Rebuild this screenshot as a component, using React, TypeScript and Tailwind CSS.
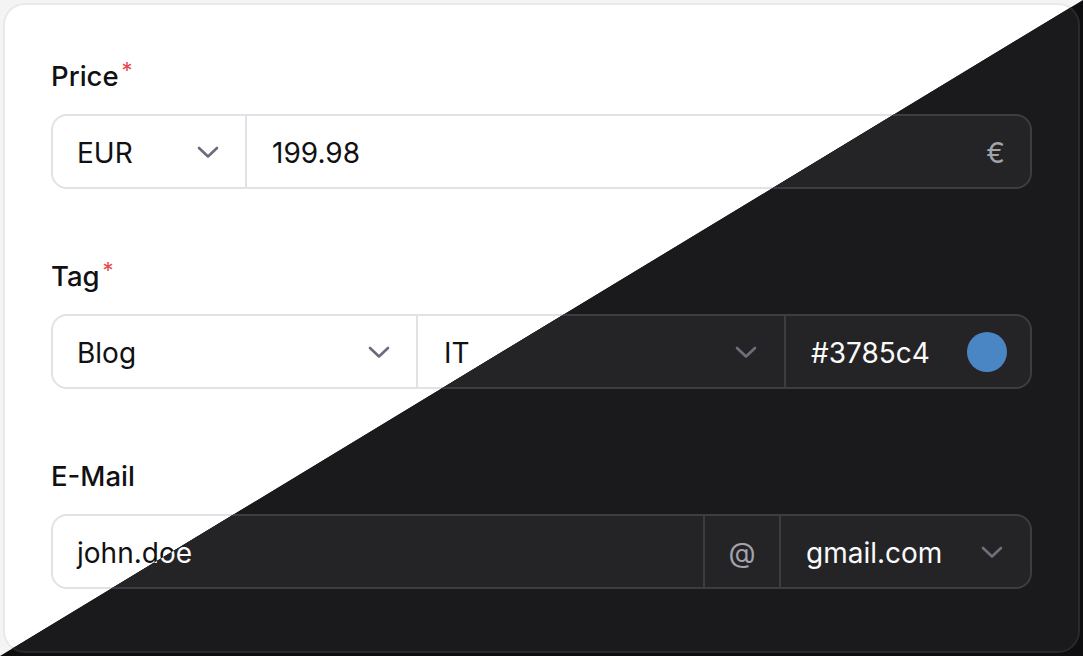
import React from "react";

type Theme = {
  page: string;
  card: string;
  label: string;
  group: string;
  divider: string;
  text: string;
  muted: string;
  chevron: string;
};

const light: Theme = {
  page: "bg-[#f4f4f5]",
  card: "bg-white border-[#e9e9ec]",
  label: "text-[#111113]",
  group: "bg-white border-[#e2e2e6]",
  divider: "border-[#e2e2e6]",
  text: "text-[#111113]",
  muted: "text-[#8b8b95]",
  chevron: "text-[#6b6b7b]",
};

const dark: Theme = {
  page: "bg-[#0e0e10]",
  card: "bg-[#1a1a1c] border-[#29292c]",
  label: "text-[#fafafa]",
  group: "bg-[#242427] border-[#3d3d41]",
  divider: "border-[#3d3d41]",
  text: "text-[#fafafa]",
  muted: "text-[#a3a3ab]",
  chevron: "text-[#6e6f7e]",
};

function Chevron({ className }: { className: string }) {
  return (
    <svg width="22" height="13" viewBox="0 0 22 13" className={className} fill="none">
      <path d="M2 2 L11 10.5 L20 2" stroke="currentColor" strokeWidth="2.6" strokeLinecap="round" strokeLinejoin="round" />
    </svg>
  );
}

function Label({ t, text, required }: { t: Theme; text: string; required?: boolean }) {
  return (
    <div className={`h-[36px] leading-[36px] text-[27.5px] font-medium ${t.label}`}>
      {text}
      {required && <span className="text-[#e5484d] text-[22px] font-normal align-top relative -top-[6px] ml-[3px]">*</span>}
    </div>
  );
}

function Form({ t }: { t: Theme }) {
  return (
    <div className={`w-[1083px] h-[656px] p-[3px] ${t.page}`}>
      <div className={`w-full h-full rounded-[22px] border-2 px-[46px] pt-[53px] flex flex-col gap-[69px] ${t.card}`}>
        <div className="flex flex-col gap-[20px]">
          <Label t={t} text="Price" required />
          <div className={`flex h-[75px] rounded-[16px] border-2 overflow-hidden text-[28px] ${t.group} ${t.text}`}>
            <div className={`w-[194px] flex items-center justify-between pl-[24px] pr-[26px] pt-[2px] border-r-2 ${t.divider}`}>
              <span>EUR</span>
              <Chevron className={t.chevron} />
            </div>
            <div className="flex-1 flex items-center justify-between pl-[25px] pr-[25px] pt-[2px]">
              <span>199.98</span>
              <span className={t.muted}>€</span>
            </div>
          </div>
        </div>

        <div className="flex flex-col gap-[20px]">
          <Label t={t} text="Tag" required />
          <div className={`flex h-[75px] rounded-[16px] border-2 overflow-hidden text-[28px] ${t.group} ${t.text}`}>
            <div className={`flex-1 flex items-center justify-between pl-[24px] pr-[26px] pt-[2px] border-r-2 ${t.divider}`}>
              <span>Blog</span>
              <Chevron className={t.chevron} />
            </div>
            <div className="flex-1 flex items-center justify-between pl-[26px] pr-[27px] pt-[2px]">
              <span>IT</span>
              <Chevron className={t.chevron} />
            </div>
            <div className={`w-[246px] flex items-center justify-between pl-[25px] pr-[23px] border-l-2 ${t.divider}`}>
              <span className="pt-[2px]">#3785c4</span>
              <span className="w-[40px] h-[40px] rounded-full bg-[#4b86c4]" />
            </div>
          </div>
        </div>

        <div className="flex flex-col gap-[20px]">
          <Label t={t} text="E-Mail" />
          <div className={`flex h-[75px] rounded-[16px] border-2 overflow-hidden text-[28px] ${t.group} ${t.text}`}>
            <div className="flex-1 flex items-center pl-[24px] pt-[2px]">
              <span>john.doe</span>
            </div>
            <div className={`w-[78px] flex items-center justify-center pt-[2px] border-l-2 border-r-2 ${t.divider}`}>
              <span className={t.muted}>@</span>
            </div>
            <div className="w-[249px] flex items-center justify-between pl-[25px] pr-[27px] pt-[2px]">
              <span>gmail.com</span>
              <Chevron className={t.chevron} />
            </div>
          </div>
        </div>
      </div>
    </div>
  );
}

export default function App() {
  return (
    <div className="relative w-[1083px] h-[656px] overflow-hidden" style={{ fontFamily: "Inter, 'Noto Sans', sans-serif" }}>
      <Form t={light} />
      <div className="absolute inset-0 [clip-path:polygon(100%_0,100%_100%,0_100%)]">
        <Form t={dark} />
      </div>
    </div>
  );
}
